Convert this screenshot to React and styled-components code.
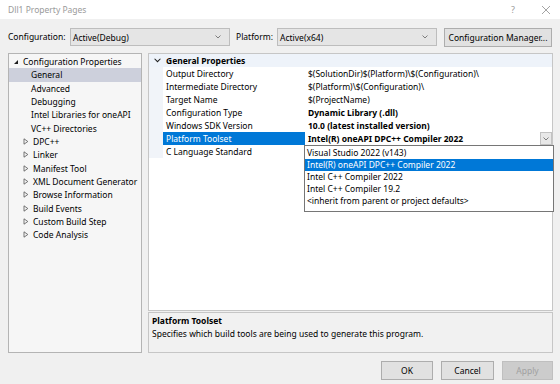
import React from "react";
import styled, { createGlobalStyle } from "styled-components";

const Global = createGlobalStyle`
  html, body { margin: 0; padding: 0; background: #f0f0f0; }
  * { box-sizing: border-box; }
`;

const Window = styled.div`
  width: 560px;
  height: 384px;
  background: #f0f0f0;
  display: flex;
  flex-direction: column;
  font-family: "Segoe UI", "Noto Sans", sans-serif;
  font-size: 8.5px;
  color: #000;
  overflow: hidden;
`;

const TitleBar = styled.div`
  height: 19px;
  background: #fff;
  display: flex;
  align-items: center;
  padding: 0 0 0 8px;
  color: #9a9a9a;
`;

const TitleText = styled.div`
  flex: 1;
`;

const TitleButton = styled.div`
  width: ${(p) => p.$w}px;
  height: 19px;
  display: flex;
  align-items: center;
  justify-content: center;
  color: #9a9a9a;
  font-size: 9px;
`;

const Toolbar = styled.div`
  height: 34px;
  display: flex;
  align-items: flex-start;
  padding: 9px 0 0 8px;
`;

const ToolLabel = styled.div`
  width: ${(p) => p.$w}px;
  height: 18px;
  line-height: 18px;
  flex: none;
`;

const Combo = styled.div`
  width: ${(p) => p.$w}px;
  height: 18px;
  margin-right: ${(p) => p.$mr || 0}px;
  flex: none;
  background: #e5e5e5;
  border: 1px solid #bdbdbd;
  display: flex;
  align-items: center;
  padding: 0 8px 0 2px;
`;

const ComboText = styled.div`
  flex: 1;
`;

const Button = styled.div`
  width: ${(p) => p.$w}px;
  height: ${(p) => p.$h || 19}px;
  flex: none;
  background: ${(p) => (p.$disabled ? "#cccccc" : "#e1e1e1")};
  border: 1px solid ${(p) => (p.$disabled ? "#bfbfbf" : "#adadad")};
  color: ${(p) => (p.$disabled ? "#a0a0a0" : "#000")};
  display: flex;
  align-items: center;
  justify-content: center;
`;

const Main = styled.div`
  height: 300px;
  display: flex;
  gap: 6px;
  padding: 0 7px 0 8px;
`;

const TreePanel = styled.div`
  width: 134px;
  flex: none;
  background: #f6f6f6;
  border: 1px solid #b4b4b4;
  padding-top: 1px;
`;

const TreeRow = styled.div`
  height: 13.33px;
  display: flex;
  align-items: center;
  padding-left: ${(p) => p.$indent}px;
  background: ${(p) => (p.$selected ? "#cdd0dc" : "transparent")};
  white-space: nowrap;
`;

const TreeToggle = styled.span`
  width: 10px;
  flex: none;
  display: flex;
  align-items: center;
`;

const RightColumn = styled.div`
  flex: 1;
  display: flex;
  flex-direction: column;
  gap: 1px;
`;

const Grid = styled.div`
  height: 258px;
  flex: none;
  background: #fff;
  border: 1px solid #c6c6c6;
  position: relative;
`;

const CategoryRow = styled.div`
  height: 13px;
  background: #eef3fa;
  display: flex;
  align-items: center;
  font-weight: bold;
`;

const CatChevron = styled.span`
  width: 17px;
  padding-left: 5px;
  display: flex;
  align-items: center;
`;

const PropRow = styled.div`
  height: 13px;
  display: grid;
  grid-template-columns: 14px 142px 1fr;
`;

const Gutter = styled.div`
  background: #f1f4f9;
`;

const NameCell = styled.div`
  padding-left: 3px;
  line-height: 13px;
  white-space: nowrap;
  background: ${(p) => (p.$selected ? "#0078d7" : "transparent")};
  color: ${(p) => (p.$selected ? "#fff" : "#000")};
`;

const ValueCell = styled.div`
  padding-left: 3px;
  line-height: 13px;
  white-space: nowrap;
  font-weight: ${(p) => (p.$bold ? "bold" : "normal")};
`;

const EditCell = styled.div`
  display: flex;
  align-items: stretch;
  font-weight: bold;
  background: #fff;
`;

const EditText = styled.div`
  flex: 1;
  padding-left: 3px;
  line-height: 13px;
  white-space: nowrap;
`;

const DropButton = styled.div`
  width: 12px;
  background: #e8e8e8;
  border: 1px solid #c2c2c2;
  display: flex;
  align-items: center;
  justify-content: center;
`;

const DropList = styled.div`
  position: absolute;
  left: 155px;
  top: 91px;
  width: 250px;
  height: 67px;
  background: #fff;
  border: 1px solid #767676;
  padding-top: 1px;
  z-index: 2;
`;

const DropItem = styled.div`
  height: 12px;
  line-height: 12px;
  padding-left: 2px;
  white-space: nowrap;
  background: ${(p) => (p.$active ? "#0078d7" : "transparent")};
  color: ${(p) => (p.$active ? "#fff" : "#000")};
`;

const Description = styled.div`
  height: 41px;
  flex: none;
  background: #f1f1f1;
  border: 1px solid #c6c6c6;
  padding: 1px 3px 0;
  line-height: 13px;
`;

const DescTitle = styled.div`
  font-weight: bold;
`;

const Footer = styled.div`
  display: flex;
  justify-content: flex-end;
  gap: 8px;
  padding: 8px 7px 0 0;
`;

const Chevron = ({ color = "#707070", w = 6, h = 4 }) => (
  <svg width={w} height={h} viewBox="0 0 6 4">
    <path d="M0.5 0.5 L3 3 L5.5 0.5" fill="none" stroke={color} strokeWidth="0.9" />
  </svg>
);

const Expanded = () => (
  <svg width="6" height="6" viewBox="0 0 6 6">
    <path d="M5 1 L5 5 L1 5 Z" fill="#1e1e1e" />
  </svg>
);

const Collapsed = () => (
  <svg width="6" height="7" viewBox="0 0 6 7">
    <path d="M1 0.8 L4.8 3.5 L1 6.2 Z" fill="none" stroke="#555" strokeWidth="0.8" />
  </svg>
);

const CloseIcon = () => (
  <svg width="10" height="10" viewBox="0 0 10 10">
    <path d="M1 1 L9 9 M9 1 L1 9" stroke="#9a9a9a" strokeWidth="0.9" />
  </svg>
);

const treeItems = [
  { label: "Configuration Properties", indent: 4, toggle: "open" },
  { label: "General", indent: 22, selected: true },
  { label: "Advanced", indent: 22 },
  { label: "Debugging", indent: 22 },
  { label: "Intel Libraries for oneAPI", indent: 22 },
  { label: "VC++ Directories", indent: 22 },
  { label: "DPC++", indent: 14, toggle: "closed" },
  { label: "Linker", indent: 14, toggle: "closed" },
  { label: "Manifest Tool", indent: 14, toggle: "closed" },
  { label: "XML Document Generator", indent: 14, toggle: "closed" },
  { label: "Browse Information", indent: 14, toggle: "closed" },
  { label: "Build Events", indent: 14, toggle: "closed" },
  { label: "Custom Build Step", indent: 14, toggle: "closed" },
  { label: "Code Analysis", indent: 14, toggle: "closed" },
];

const props = [
  { name: "Output Directory", value: "$(SolutionDir)$(Platform)\\$(Configuration)\\" },
  { name: "Intermediate Directory", value: "$(Platform)\\$(Configuration)\\" },
  { name: "Target Name", value: "$(ProjectName)" },
  { name: "Configuration Type", value: "Dynamic Library (.dll)", bold: true },
  { name: "Windows SDK Version", value: "10.0 (latest installed version)", bold: true },
  { name: "Platform Toolset", value: "Intel(R) oneAPI DPC++ Compiler 2022", selected: true },
  { name: "C Language Standard", value: "" },
];

const options = [
  "Visual Studio 2022 (v143)",
  "Intel(R) oneAPI DPC++ Compiler 2022",
  "Intel C++ Compiler 2022",
  "Intel C++ Compiler 19.2",
  "<inherit from parent or project defaults>",
];

export default function App() {
  return (
    <>
      <Global />
      <Window>
        <TitleBar>
          <TitleText>Dll1 Property Pages</TitleText>
          <TitleButton $w={38}>?</TitleButton>
          <TitleButton $w={28}>
            <CloseIcon />
          </TitleButton>
        </TitleBar>

        <Toolbar>
          <ToolLabel $w={62}>Configuration:</ToolLabel>
          <Combo $w={160} $mr={6}>
            <ComboText>Active(Debug)</ComboText>
            <Chevron />
          </Combo>
          <ToolLabel $w={41}>Platform:</ToolLabel>
          <Combo $w={160} $mr={7}>
            <ComboText>Active(x64)</ComboText>
            <Chevron />
          </Combo>
          <Button $w={108}>Configuration Manager...</Button>
        </Toolbar>

        <Main>
          <TreePanel>
            {treeItems.map((t) => (
              <TreeRow key={t.label} $indent={t.indent} $selected={t.selected}>
                {t.toggle && (
                  <TreeToggle>{t.toggle === "open" ? <Expanded /> : <Collapsed />}</TreeToggle>
                )}
                {t.label}
              </TreeRow>
            ))}
          </TreePanel>

          <RightColumn>
            <Grid>
              <CategoryRow>
                <CatChevron>
                  <Chevron color="#1e1e1e" w={7} h={5} />
                </CatChevron>
                General Properties
              </CategoryRow>
              {props.map((p) => (
                <PropRow key={p.name}>
                  <Gutter />
                  <NameCell $selected={p.selected}>{p.name}</NameCell>
                  {p.selected ? (
                    <EditCell>
                      <EditText>{p.value}</EditText>
                      <DropButton>
                        <Chevron />
                      </DropButton>
                    </EditCell>
                  ) : (
                    <ValueCell $bold={p.bold}>{p.value}</ValueCell>
                  )}
                </PropRow>
              ))}
              <DropList>
                {options.map((o, i) => (
                  <DropItem key={o} $active={i === 1}>
                    {o}
                  </DropItem>
                ))}
              </DropList>
            </Grid>
            <Description>
              <DescTitle>Platform Toolset</DescTitle>
              <div>Specifies which build tools are being used to generate this program.</div>
            </Description>
          </RightColumn>
        </Main>

        <Footer>
          <Button $w={52}>OK</Button>
          <Button $w={53}>Cancel</Button>
          <Button $w={51} $disabled>
            Apply
          </Button>
        </Footer>
      </Window>
    </>
  );
}
